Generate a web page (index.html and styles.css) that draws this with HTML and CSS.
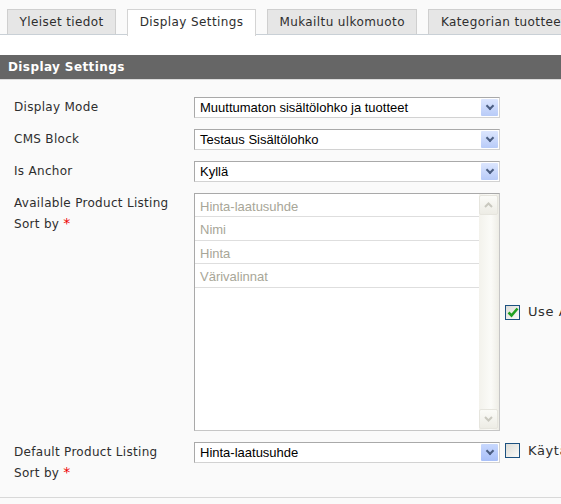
FILE: index.html
```html
<!DOCTYPE html>
<html lang="fi">
<head>
  <meta charset="UTF-8" />
  <title>Display Settings</title>
  <link rel="stylesheet" href="styles.css">
</head>
<body>

<div class="tabs">
  <div class="tab">Yleiset tiedot</div>
  <div class="tab active">Display Settings</div>
  <div class="tab">Mukailtu ulkomuoto</div>
  <div class="tab">Kategorian tuotteet</div>
</div>

<div class="tab-space"></div>

<div class="section-head">Display Settings</div>

<div class="form">
  <div class="label">Display Mode</div>
  <div class="select">Muuttumaton sisältölohko ja tuotteet<span class="arrow"></span></div>
  <div class="extra"></div>

  <div class="label">CMS Block</div>
  <div class="select">Testaus Sisältölohko<span class="arrow"></span></div>
  <div class="extra"></div>

  <div class="label">Is Anchor</div>
  <div class="select">Kyllä<span class="arrow"></span></div>
  <div class="extra"></div>

  <div class="label">Available Product Listing<br>Sort by <span class="req">*</span></div>
  <div class="listbox">
    <div class="options">
      <div class="option">Hinta-laatusuhde</div>
      <div class="option">Nimi</div>
      <div class="option">Hinta</div>
      <div class="option">Värivalinnat</div>
    </div>
    <div class="scrollbar">
      <span class="sb-btn"><svg width="9" height="6" viewBox="0 0 9 6"><path d="M1 5 L4.5 1.5 L8 5" fill="none" stroke="#c9c8bf" stroke-width="2"/></svg></span>
      <span class="sb-btn"><svg width="9" height="6" viewBox="0 0 9 6"><path d="M1 1 L4.5 4.5 L8 1" fill="none" stroke="#c9c8bf" stroke-width="2"/></svg></span>
    </div>
  </div>
  <div class="extra middle">
    <span class="check on"><svg width="12" height="11" viewBox="0 0 12 11"><path d="M1.5 5.5 L4.5 8.5 L10.5 1.5" fill="none" stroke="#21a121" stroke-width="2.6"/></svg></span>
    <span class="check-text">Use All Available Attributes</span>
  </div>

  <div class="label">Default Product Listing<br>Sort by <span class="req">*</span></div>
  <div class="select blue">Hinta-laatusuhde<span class="arrow"></span></div>
  <div class="extra">
    <span class="check"></span>
    <span class="check-text">Käytä oletusasetusta</span>
  </div>
</div>

<div class="bottom-line"></div>

</body>
</html>
```

FILE: styles.css
```css
html, body {
    margin: 0;
    padding: 0;
    background: #fafafa;
    overflow: hidden;
    font-family: "DejaVu Sans", Verdana, sans-serif;
    color: #2e2e2e;
}

/* tab strip */
.tabs {
    display: flex;
    gap: 11px;
    padding: 9px 0 0 7px;
    height: 25px;
    border-bottom: 1px solid #c9d0d6;
    white-space: nowrap;
}
.tab {
    flex-shrink: 0;
    height: 24px;
    line-height: 24px;
    padding: 0 11.5px;
    font-size: 12px;
    letter-spacing: 0.4px;
    color: #2e2e2e;
    background: #e6e6e6;
    border: 1px solid #cfcfcf;
    border-bottom: none;
}
.tab.active {
    background: #fff;
    height: 26px;
    border-color: #d4d4d4;
}

.tab-space {
    height: 20px;
    background: #fff;
}

.section-head {
    height: 24px;
    line-height: 24px;
    padding-left: 8px;
    background: #666;
    color: #fff;
    font-size: 12px;
    font-weight: bold;
    letter-spacing: 0.4px;
    border-bottom: 1px solid #dcdcdc;
}

/* form grid */
.form {
    display: grid;
    grid-template-columns: 180px 306px 1fr;
    row-gap: 11px;
    padding: 17px 0 0 14px;
    white-space: nowrap;
}
.label {
    font-size: 12px;
    line-height: 20px;
    letter-spacing: 0.3px;
}
.req {
    color: #e00;
    font-size: 14px;
}

.select {
    position: relative;
    height: 19px;
    line-height: 19px;
    padding-left: 5px;
    background: #fff;
    border: 1px solid #a9a9a9;
    border-right-color: #d2d2d2;
    border-bottom-color: #d2d2d2;
    font-family: "Liberation Sans", Arial, sans-serif;
    font-size: 13px;
    color: #000;
}
.arrow {
    position: absolute;
    right: 1px;
    top: 1px;
    width: 17px;
    height: 17px;
    background: linear-gradient(#dce6fe, #b8cbf8);
    border-radius: 1px;
}
.arrow::after {
    content: "";
    position: absolute;
    left: 6px;
    top: 4px;
    width: 4px;
    height: 4px;
    border-right: 2px solid #4b5e82;
    border-bottom: 2px solid #4b5e82;
    transform: rotate(45deg);
}
.select.blue .arrow {
    background: linear-gradient(#c8d8fe, #a9c0f8);
}

.listbox {
    display: flex;
    height: 236px;
    background: #fff;
    border: 1px solid #a9a9a9;
    border-right-color: #c6c6c6;
    border-bottom-color: #c6c6c6;
}
.options {
    flex: 1;
}
.option {
    height: 22px;
    line-height: 25px;
    padding-left: 5px;
    border-bottom: 1px solid #dedede;
    font-family: "Liberation Sans", Arial, sans-serif;
    font-size: 13px;
    color: #a8a698;
}
.option + .option {
    height: 22.5px;
}
.scrollbar {
    width: 19px;
    display: flex;
    flex-direction: column;
    justify-content: space-between;
    padding: 1px 1px 1px 0;
    background: linear-gradient(90deg, #f3f2ec, #fbfbf8 60%, #eeede6);
}
.sb-btn {
    height: 18px;
    display: flex;
    align-items: center;
    justify-content: center;
    background: linear-gradient(#fbfbf8, #edece5);
    border: 1px solid #e6e5de;
    border-radius: 2px;
}

.extra {
    display: flex;
    align-items: flex-start;
    gap: 8px;
    padding: 1px 0 0 5px;
}
.extra.middle {
    align-items: center;
    padding: 0 0 0 5px;
}
.check {
    flex-shrink: 0;
    width: 13px;
    height: 13px;
    border: 1px solid #1c5180;
    background: linear-gradient(135deg, #dcdcd7, #fbfbf9);
    display: flex;
    align-items: center;
    justify-content: center;
}
.check-text {
    font-size: 13px;
    line-height: 16px;
    letter-spacing: 0.6px;
}

.bottom-line {
    margin-top: 14px;
    border-top: 1px solid #d8d8d8;
}
```
